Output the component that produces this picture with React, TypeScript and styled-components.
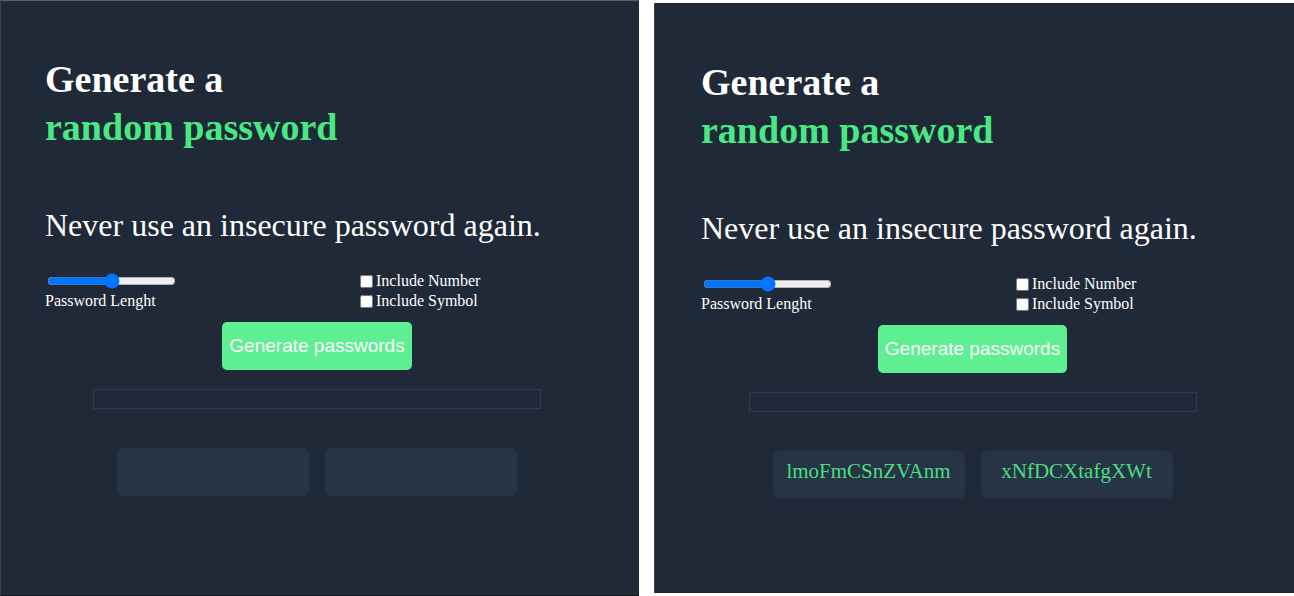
import React from "react";
import styled, { createGlobalStyle } from "styled-components";

const GlobalStyle = createGlobalStyle`
  html, body {
    margin: 0;
    padding: 0;
    background: #ffffff;
    font-family: "Liberation Serif", "Times New Roman", serif;
  }
  * { box-sizing: border-box; }
`;

const Page = styled.div`
  display: flex;
  align-items: flex-start;
  width: 1294px;
  height: 596px;
  overflow: hidden;
`;

const Panel = styled.section<{ $variant: "left" | "right" }>`
  flex: none;
  background: #1f2937;
  color: #ffffff;
  width: ${(p) => (p.$variant === "left" ? "639px" : "640px")};
  height: ${(p) => (p.$variant === "left" ? "596px" : "590px")};
  margin-left: ${(p) => (p.$variant === "left" ? "0" : "15px")};
  margin-top: ${(p) => (p.$variant === "left" ? "0" : "3px")};
  border-left: 1px solid #3a4250;
  border-top: ${(p) => (p.$variant === "left" ? "1px solid #5a5f68" : "none")};
  border-bottom: ${(p) => (p.$variant === "left" ? "1px solid #15191f" : "none")};
  padding: ${(p) => (p.$variant === "left" ? "54px 50px 0 44px" : "55px 50px 0 46px")};
  display: flex;
  flex-direction: column;
`;

const Title = styled.h1`
  margin: 0;
  font-size: 38px;
  line-height: 48px;
  font-weight: 700;
  color: #ffffff;
`;

const Accent = styled.span`
  display: block;
  color: #4ae883;
`;

const Subtitle = styled.p`
  margin: 56px 0 0;
  font-size: 32px;
  line-height: 36px;
  font-weight: 400;
  color: #ffffff;
`;

const Controls = styled.div`
  display: grid;
  grid-template-columns: 311px auto;
  margin-top: 28px;
  font-size: 16px;
  line-height: 20px;
`;

const SliderColumn = styled.div`
  display: flex;
  flex-direction: column;
  align-items: flex-start;
`;

const Slider = styled.input`
  width: 129px;
  height: 16px;
  margin: 2px;
  accent-color: #0075ff;
`;

const FieldLabel = styled.label`
  font-size: 16px;
  line-height: 20px;
`;

const Options = styled.div`
  display: flex;
  flex-direction: column;
`;

const Option = styled.label`
  display: flex;
  align-items: center;
  height: 20px;
  font-size: 16px;
`;

const Check = styled.input`
  width: 13px;
  height: 13px;
  margin: 0 3px 0 4px;
`;

const Action = styled.button`
  align-self: center;
  margin-top: 11px;
  height: 48px;
  padding: 0 7px;
  border: none;
  border-radius: 5px;
  background: #5eef92;
  color: #ffffff;
  font-family: "Liberation Sans", Arial, sans-serif;
  font-size: 19px;
  cursor: pointer;
`;

const Output = styled.div`
  align-self: center;
  margin-top: 19px;
  width: 448px;
  height: 20px;
  border: 1px solid #2f3c4f;
`;

const Results = styled.div`
  display: flex;
  justify-content: center;
  gap: 16px;
  margin-top: 39px;
`;

const ResultCard = styled.div`
  width: 192px;
  height: 48px;
  padding-top: 9px;
  border-radius: 6px;
  background: #263446;
  color: #4ade80;
  font-size: 21px;
  line-height: 23px;
  text-align: center;
`;

function Generator({ variant, passwords }: { variant: "left" | "right"; passwords: string[] }) {
  return (
    <Panel $variant={variant}>
      <Title>
        Generate a
        <Accent>random password</Accent>
      </Title>
      <Subtitle>Never use an insecure password again.</Subtitle>
      <Controls>
        <SliderColumn>
          <Slider type="range" min={0} max={100} defaultValue={50} />
          <FieldLabel>Password Lenght</FieldLabel>
        </SliderColumn>
        <Options>
          <Option>
            <Check type="checkbox" />
            Include Number
          </Option>
          <Option>
            <Check type="checkbox" />
            Include Symbol
          </Option>
        </Options>
      </Controls>
      <Action type="button">Generate passwords</Action>
      <Output />
      <Results>
        {passwords.map((p, i) => (
          <ResultCard key={i}>{p}</ResultCard>
        ))}
      </Results>
    </Panel>
  );
}

export default function App() {
  return (
    <>
      <GlobalStyle />
      <Page>
        <Generator variant="left" passwords={["", ""]} />
        <Generator variant="right" passwords={["lmoFmCSnZVAnm", "xNfDCXtafgXWt"]} />
      </Page>
    </>
  );
}
